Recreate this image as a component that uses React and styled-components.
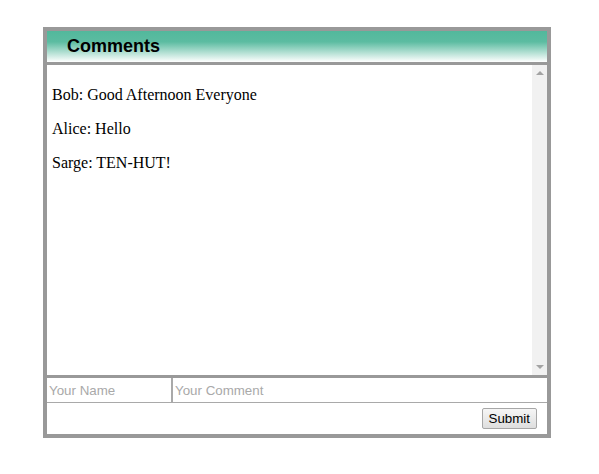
import React from 'react'
import styled, { createGlobalStyle } from 'styled-components'

const GlobalStyle = createGlobalStyle`
  body {
    margin: 0;
    background: #fff;
    font-family: "Liberation Serif", "Times New Roman", serif;
  }
`

const Page = styled.div`
  padding: 27px 0 0 43px;
`

const Box = styled.div`
  width: 500px;
  border: 4px solid #999;
  background: #fff;
`

const Header = styled.div`
  height: 31px;
  border-bottom: 3px solid #999;
  background: linear-gradient(#52b89c 0%, #5cbca1 35%, #ffffff 100%);
  display: flex;
  align-items: center;
  padding-left: 20px;
  h2 {
    margin: 0;
    font-family: "Liberation Sans", Arial, sans-serif;
    font-size: 18px;
    font-weight: 700;
    color: #000;
  }
`

const MessagePane = styled.div`
  display: flex;
  height: 310px;
  border-bottom: 3px solid #999;
`

const Messages = styled.div`
  flex: 1;
  padding: 5px;
  overflow: hidden;
  font-size: 16px;
  p {
    margin: 16px 0;
  }
`

const ScrollTrack = styled.div`
  width: 15px;
  background: #f1f1f1;
  display: flex;
  flex-direction: column;
  justify-content: space-between;
  align-items: center;
  padding: 6px 0;
`

const Arrow = styled.span`
  width: 0;
  height: 0;
  border-left: 4px solid transparent;
  border-right: 4px solid transparent;
  ${(p) => (p.$down ? 'border-top: 4px solid #a3a3a3;' : 'border-bottom: 4px solid #a3a3a3;')}
`

const InputRow = styled.div`
  display: flex;
  height: 25px;
`

const Field = styled.input`
  box-sizing: border-box;
  width: ${(p) => p.$width || 'auto'};
  flex: ${(p) => (p.$width ? 'none' : '1')};
  min-width: 0;
  height: 25px;
  margin: 0;
  padding: 1px 2px 0;
  border: 1px solid #a9a9a9;
  border-top: none;
  border-left: ${(p) => (p.$first ? 'none' : '1px solid #a9a9a9')};
  border-right: ${(p) => (p.$first ? '1px solid #a9a9a9' : 'none')};
  font-family: "Liberation Sans", Arial, sans-serif;
  font-size: 13.33px;
  outline: none;
  &::placeholder {
    color: #a9a9a9;
  }
`

const SubmitRow = styled.div`
  height: 31px;
  display: flex;
  align-items: center;
  justify-content: flex-end;
  padding-right: 10px;
`

const SubmitButton = styled.button`
  height: 21px;
  padding: 0 6px;
  border: 1px solid #a7a7a7;
  border-radius: 2px;
  background: linear-gradient(#f6f6f6, #dedede);
  font-family: "Liberation Sans", Arial, sans-serif;
  font-size: 13.33px;
  color: #000;
`

const comments = [
  { name: 'Bob', text: 'Good Afternoon Everyone' },
  { name: 'Alice', text: 'Hello' },
  { name: 'Sarge', text: 'TEN-HUT!' },
]

export default function App() {
  return (
    <>
      <GlobalStyle />
      <Page>
        <Box>
          <Header>
            <h2>Comments</h2>
          </Header>
          <MessagePane>
            <Messages>
              {comments.map((c) => (
                <p key={c.name}>
                  {c.name}: {c.text}
                </p>
              ))}
            </Messages>
            <ScrollTrack>
              <Arrow />
              <Arrow $down />
            </ScrollTrack>
          </MessagePane>
          <InputRow>
            <Field $first $width="125px" placeholder="Your Name" />
            <Field placeholder="Your Comment" />
          </InputRow>
          <SubmitRow>
            <SubmitButton>Submit</SubmitButton>
          </SubmitRow>
        </Box>
      </Page>
    </>
  )
}
